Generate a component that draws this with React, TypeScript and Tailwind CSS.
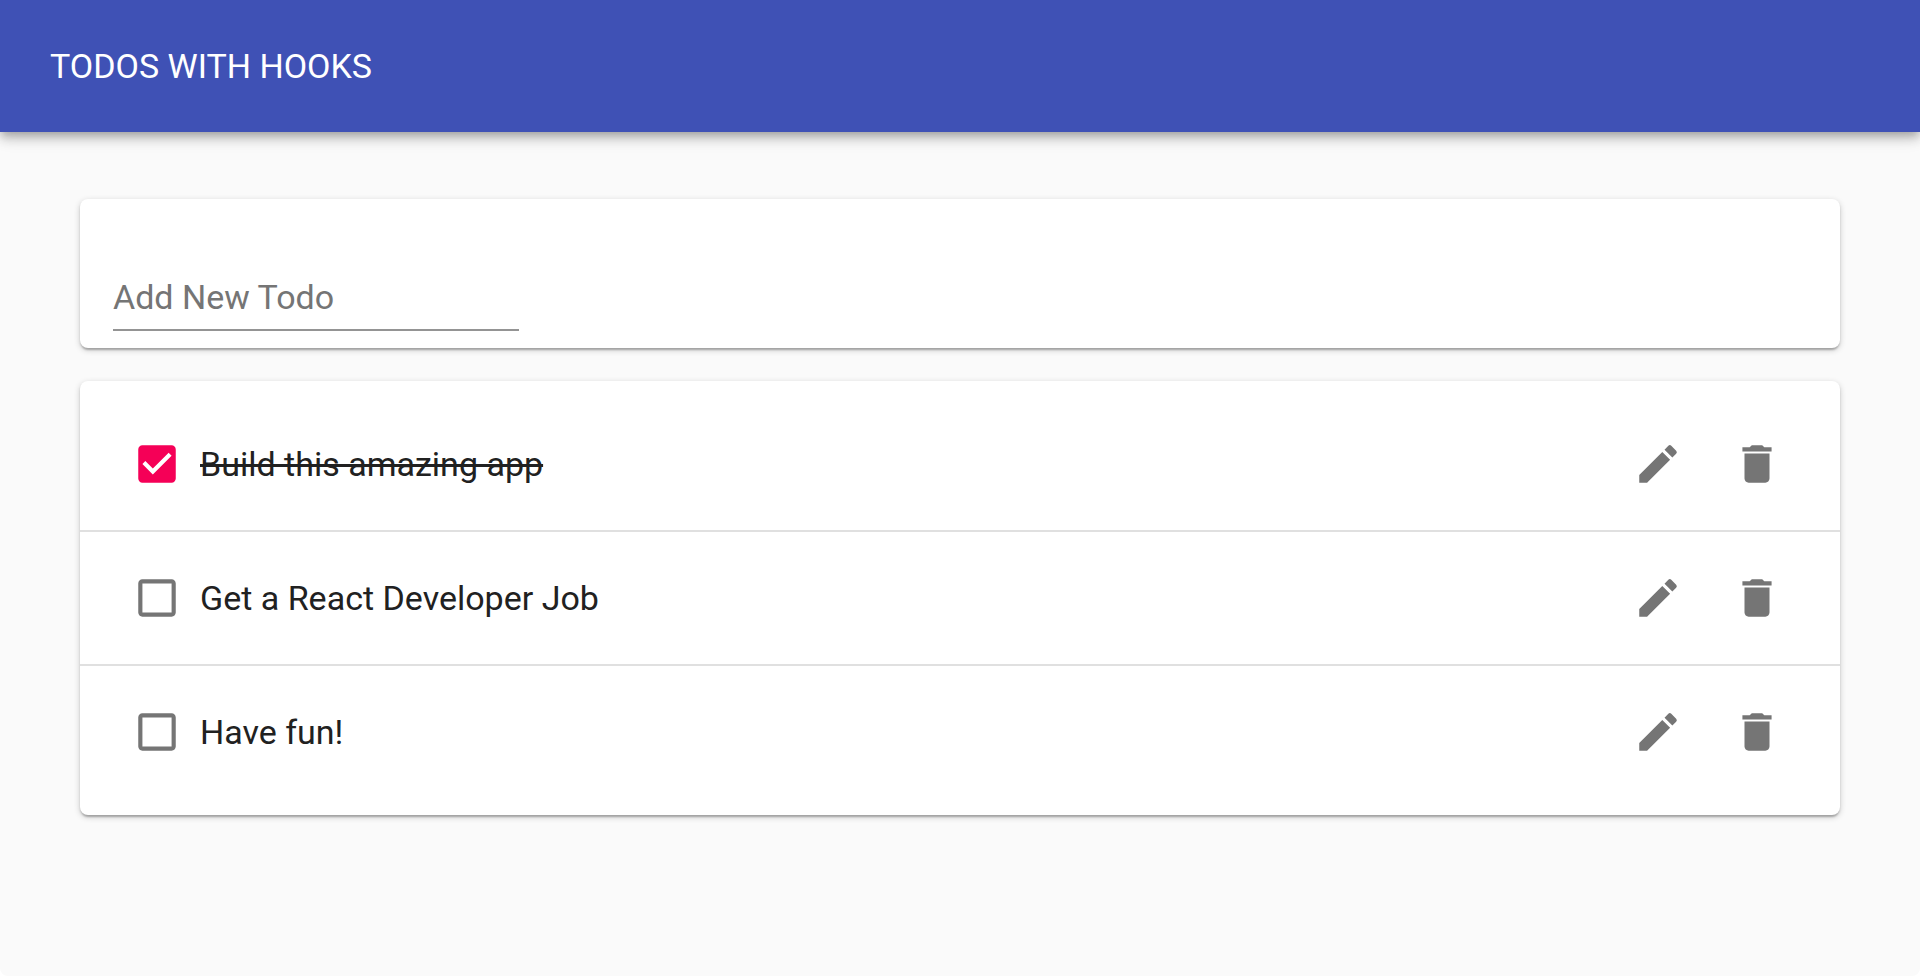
import { useState } from "react";
import type { FormEvent } from "react";
import { MdCheckBox, MdCheckBoxOutlineBlank, MdDelete, MdEdit } from "react-icons/md";

type Todo = { id: number; task: string; completed: boolean };

const initialTodos: Todo[] = [
  { id: 1, task: "Build this amazing app", completed: true },
  { id: 2, task: "Get a React Developer Job", completed: false },
  { id: 3, task: "Have fun!", completed: false },
];

const paper =
  "rounded-lg bg-white shadow-[0_2px_6px_rgba(0,0,0,0.2),0_2px_2px_rgba(0,0,0,0.14),0_4px_2px_-2px_rgba(0,0,0,0.12)]";

const iconButton =
  "flex size-[99px] shrink-0 cursor-pointer items-center justify-center rounded-full text-[#757575] hover:bg-black/5";

type TodoItemProps = {
  todo: Todo;
  onToggle: () => void;
  onEdit: () => void;
  onRemove: () => void;
};

function TodoItem({ todo, onToggle, onEdit, onRemove }: TodoItemProps) {
  const fieldId = `todo-${todo.id}`;
  return (
    <li className="box-content flex h-[132px] items-center pr-[34px] pl-[52px]">
      <span className="grid size-[50px] shrink-0">
        <input
          id={fieldId}
          type="checkbox"
          checked={todo.completed}
          onChange={onToggle}
          className="col-start-1 row-start-1 size-[50px] cursor-pointer appearance-none"
        />
        {todo.completed ? (
          <MdCheckBox aria-hidden className="pointer-events-none col-start-1 row-start-1 size-[50px] text-[#f50057]" />
        ) : (
          <MdCheckBoxOutlineBlank
            aria-hidden
            className="pointer-events-none col-start-1 row-start-1 size-[50px] text-[#757575]"
          />
        )}
      </span>
      <label
        htmlFor={fieldId}
        className={`ml-[18px] flex-1 cursor-pointer text-[34px] leading-[50px] ${todo.completed ? "line-through" : ""}`}
      >
        {todo.task}
      </label>
      <button type="button" aria-label="Edit" onClick={onEdit} className={iconButton}>
        <MdEdit aria-hidden className="size-[50px]" />
      </button>
      <button type="button" aria-label="Delete" onClick={onRemove} className={iconButton}>
        <MdDelete aria-hidden className="size-[50px]" />
      </button>
    </li>
  );
}

export default function App() {
  const [todos, setTodos] = useState<Todo[]>(initialTodos);
  const [draft, setDraft] = useState("");

  const addTodo = (event: FormEvent) => {
    event.preventDefault();
    const task = draft.trim();
    if (!task) return;
    setTodos([...todos, { id: Date.now(), task, completed: false }]);
    setDraft("");
  };

  const toggle = (id: number) =>
    setTodos(todos.map((t) => (t.id === id ? { ...t, completed: !t.completed } : t)));

  const remove = (id: number) => setTodos(todos.filter((t) => t.id !== id));

  const edit = (todo: Todo) => {
    setDraft(todo.task);
    remove(todo.id);
  };

  return (
    <div className="min-h-screen rounded-b-lg bg-[#fafafa] font-[Roboto,sans-serif] text-[#212121]">
      <header className="flex h-[132px] items-center bg-[#3f51b5] px-[50px] text-white shadow-[0_4px_8px_-2px_rgba(0,0,0,0.2),0_8px_10px_rgba(0,0,0,0.14),0_2px_20px_rgba(0,0,0,0.12)]">
        <h1 className="text-[34px] leading-[50px]">TODOS WITH HOOKS</h1>
      </header>

      <main className="mx-20 mt-[67px] flex flex-col gap-[33px]">
        <form onSubmit={addTodo} className={`${paper} px-[33px] pt-[66px] pb-[17px]`}>
          <input
            type="text"
            aria-label="Add New Todo"
            placeholder="Add New Todo"
            value={draft}
            onChange={(event) => setDraft(event.target.value)}
            className="block h-[66px] w-[406px] border-b-2 border-[#949494] text-[34px] leading-[50px] outline-none placeholder:text-[#757575] placeholder:opacity-100"
          />
        </form>

        <ul className={`${paper} divide-y-2 divide-[#e0e0e0] py-[17px]`}>
          {todos.map((todo) => (
            <TodoItem
              key={todo.id}
              todo={todo}
              onToggle={() => toggle(todo.id)}
              onEdit={() => edit(todo)}
              onRemove={() => remove(todo.id)}
            />
          ))}
        </ul>
      </main>
    </div>
  );
}
